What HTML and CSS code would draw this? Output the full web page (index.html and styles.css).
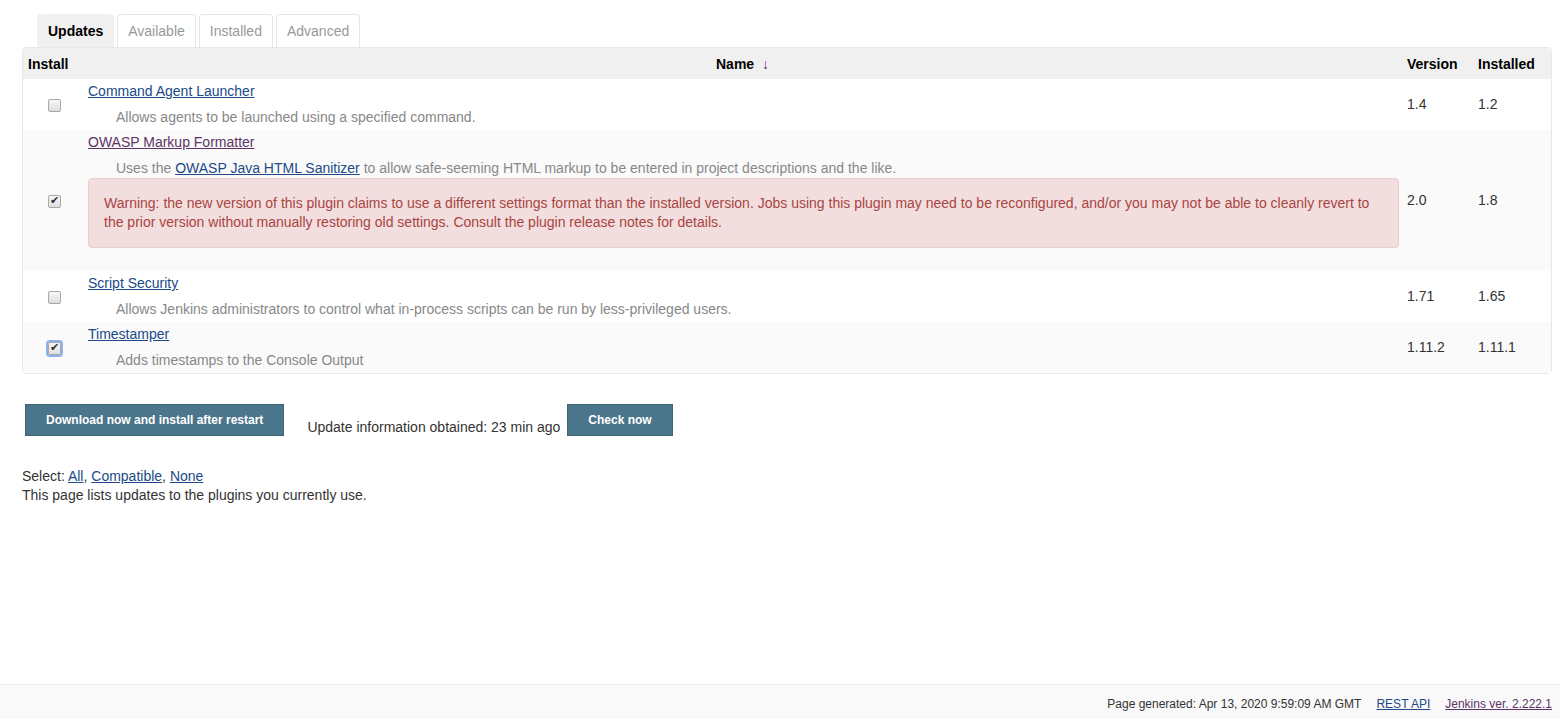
FILE: index.html
```html
<!DOCTYPE html>
<html>
<head>
<meta charset="utf-8">
<title>Update Center</title>
<link rel="stylesheet" href="styles.css">
</head>
<body>
<div class="page">
  <main class="main">
    <div class="tabs">
      <a class="tab active">Updates</a>
      <a class="tab">Available</a>
      <a class="tab">Installed</a>
      <a class="tab">Advanced</a>
    </div>
    <table class="plugins">
      <thead>
        <tr>
          <th class="c-install">Install</th>
          <th class="c-name">Name <a class="sort">↓</a></th>
          <th class="c-ver">Version</th>
          <th class="c-inst">Installed</th>
        </tr>
      </thead>
      <tbody>
        <tr>
          <td class="c-install"><input type="checkbox" class="cb"></td>
          <td class="c-name">
            <div class="pname"><a href="#">Command Agent Launcher</a></div>
            <div class="desc">Allows agents to be launched using a specified command.</div>
          </td>
          <td class="c-ver">1.4</td>
          <td class="c-inst">1.2</td>
        </tr>
        <tr class="alt">
          <td class="c-install"><input type="checkbox" class="cb" checked></td>
          <td class="c-name">
            <div class="pname"><a href="#" class="visited">OWASP Markup Formatter</a></div>
            <div class="desc">Uses the <a href="#" class="dlink">OWASP Java HTML Sanitizer</a> to allow safe-seeming HTML markup to be entered in project descriptions and the like.</div>
            <div class="warning">Warning: the new version of this plugin claims to use a different settings format than the installed version. Jobs using this plugin may need to be reconfigured, and/or you may not be able to cleanly revert to the prior version without manually restoring old settings. Consult the plugin release notes for details.</div>
          </td>
          <td class="c-ver">2.0</td>
          <td class="c-inst">1.8</td>
        </tr>
        <tr>
          <td class="c-install"><input type="checkbox" class="cb"></td>
          <td class="c-name">
            <div class="pname"><a href="#">Script Security</a></div>
            <div class="desc">Allows Jenkins administrators to control what in-process scripts can be run by less-privileged users.</div>
          </td>
          <td class="c-ver">1.71</td>
          <td class="c-inst">1.65</td>
        </tr>
        <tr class="alt">
          <td class="c-install"><input type="checkbox" class="cb focused" checked></td>
          <td class="c-name">
            <div class="pname"><a href="#">Timestamper</a></div>
            <div class="desc">Adds timestamps to the Console Output</div>
          </td>
          <td class="c-ver">1.11.2</td>
          <td class="c-inst">1.11.1</td>
        </tr>
      </tbody>
    </table>
    <div class="actions">
      <button class="btn btn-download">Download now and install after restart</button>
      <span class="info">Update information obtained: 23 min ago</span>
      <button class="btn btn-check">Check now</button>
    </div>
    <div class="select">Select: <a href="#">All</a>, <a href="#">Compatible</a>, <a href="#">None</a></div>
    <div class="note">This page lists updates to the plugins you currently use.</div>
  </main>
  <footer class="footer">
    <span>Page generated: Apr 13, 2020 9:59:09 AM GMT</span>
    <a href="#" class="rest">REST API</a>
    <a href="#" class="ver">Jenkins ver. 2.222.1</a>
  </footer>
</div>
</body>
</html>
```

FILE: styles.css
```css
html, body {
  margin: 0;
  padding: 0;
  background: #fff;
}
body {
  font-family: "Liberation Sans", Arial, Helvetica, sans-serif;
  font-size: 14px;
  color: #333;
}
.page {
  display: flex;
  flex-direction: column;
  min-height: 719px;
}
.main {
  flex: 1;
  padding: 14px 8px 0 22px;
}
.tabs {
  display: flex;
  gap: 3px;
  padding-left: 15px;
}
.tab {
  display: block;
  height: 32px;
  line-height: 33px;
  padding: 0 10px;
  border: 1px solid #e6e6e6;
  border-bottom: none;
  border-radius: 4px 4px 0 0;
  color: #999;
  text-decoration: none;
  font-size: 14px;
}
.tab.active {
  background: #f0f0f0;
  border-color: #f0f0f0;
  color: #000;
  font-weight: bold;
}
.plugins {
  width: 100%;
  border-collapse: separate;
  border-spacing: 0;
  border: 1px solid #e8e8e8;
  border-radius: 4px;
}
.plugins th {
  background: #f0f0f0;
  color: #000;
  font-weight: bold;
  height: 31px;
  padding: 0 6px;
  text-align: left;
  white-space: nowrap;
}
.plugins th.c-install {
  padding-left: 5px;
  border-top-left-radius: 4px;
}
.plugins th.c-ver {
  padding-left: 8px;
}
.plugins th.c-inst {
  padding-left: 7px;
  border-top-right-radius: 4px;
}
.plugins th.c-name {
  text-align: center;
}
.sort {
  color: #5c3566;
  font-weight: normal;
  margin-left: 4px;
  text-decoration: none;
}
.plugins td {
  vertical-align: middle;
  padding: 2px 6px 3px;
}
.plugins tr.alt td {
  background: #fafafa;
}
.plugins td.c-install {
  width: 51px;
  text-align: center;
  padding: 0 6px;
}
.plugins td.c-name {
  padding-left: 2px;
  padding-right: 0;
}
.plugins td.c-ver {
  width: 58px;
  padding-left: 8px;
}
.plugins td.c-inst {
  width: 67px;
  padding-left: 7px;
}
.cb {
  -webkit-appearance: none;
  appearance: none;
  position: relative;
  margin: 0;
  width: 13px;
  height: 13px;
  border: 1px solid #a8a8a8;
  border-radius: 2px;
  background: linear-gradient(#f6f6f6, #dedede);
  vertical-align: middle;
  box-sizing: border-box;
}
.cb:checked::after {
  content: "\2714";
  position: absolute;
  left: 1px;
  top: -2px;
  font-family: "DejaVu Sans", sans-serif;
  font-size: 11px;
  line-height: 14px;
  color: #333;
}
.cb.focused {
  box-shadow: 0 0 0 2px #8db0ec;
}
.pname {
  line-height: 20px;
}
.pname a, .desc a.dlink {
  color: #204a87;
  text-decoration: underline;
}
.pname a.visited {
  color: #5c3566;
}
.desc {
  color: #888;
  line-height: 20px;
  margin-top: 6px;
  padding-left: 28px;
}
.warning {
  background: #f2dede;
  border: 1px solid #ebccd1;
  border-radius: 4px;
  color: #a94442;
  line-height: 19px;
  padding: 15px;
  margin-bottom: 20px;
}
.actions {
  display: flex;
  align-items: flex-start;
  margin-top: 30px;
  padding-left: 3px;
}
.btn {
  height: 32px;
  background: #4b758b;
  border: 1px solid #3f6478;
  color: #fff;
  font-family: "Liberation Sans", Arial, sans-serif;
  font-weight: bold;
  font-size: 12px;
  padding: 0 20px;
  margin: 0;
  cursor: pointer;
}
.info {
  margin: 14px 7px 0 23px;
  line-height: 19px;
}
.select {
  margin-top: 30px;
  line-height: 19px;
}
.select a {
  color: #204a87;
}
.note {
  line-height: 19px;
}
.footer {
  background: #f9f9f9;
  border-top: 1px solid #ececec;
  height: 30px;
  display: flex;
  justify-content: flex-end;
  align-items: center;
  gap: 15px;
  padding: 4px 8px 0 0;
  font-size: 12px;
  color: #333;
}
.footer a {
  color: #204a87;
}
.footer a.ver {
  color: #5c3566;
}
```
